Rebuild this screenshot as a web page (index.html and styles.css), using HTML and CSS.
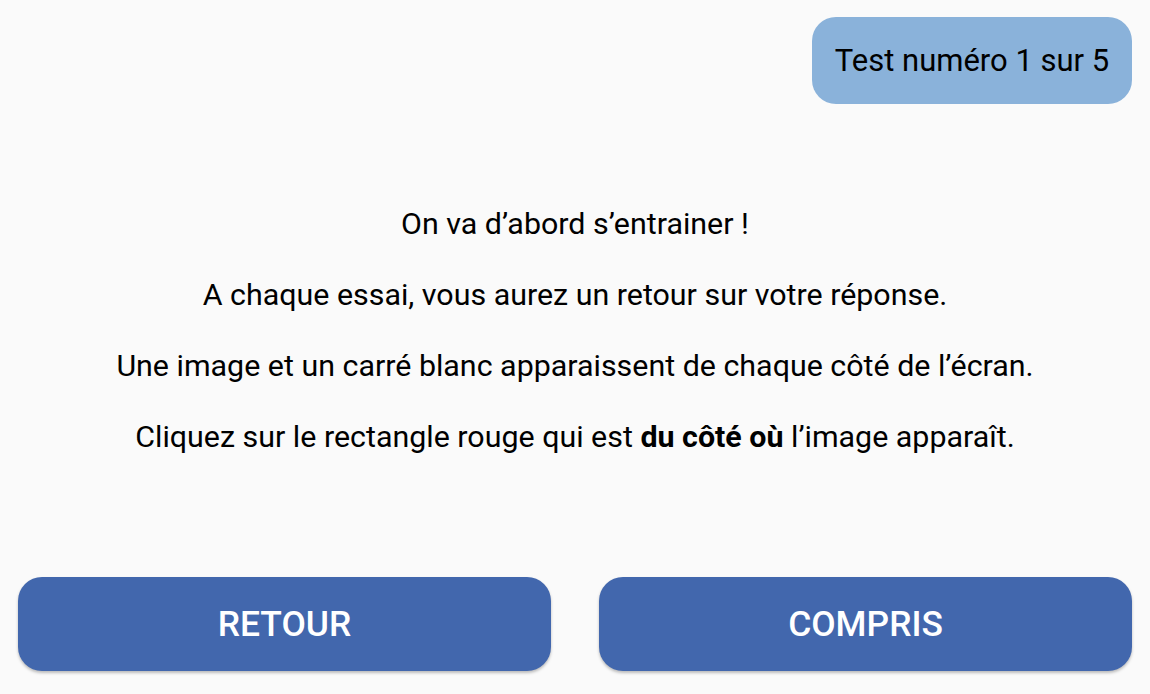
FILE: index.html
```html
<!DOCTYPE html>
<html lang="fr">
<head>
<meta charset="utf-8">
<link rel="stylesheet" href="styles.css">
</head>
<body>
<div class="screen">
  <header class="top">
    <div class="badge">Test numéro 1 sur 5</div>
  </header>
  <main class="content">
    <p>On va d’abord s’entrainer !</p>
    <p>A chaque essai, vous aurez un retour sur votre réponse.</p>
    <p>Une image et un carré blanc apparaissent de chaque côté de l’écran.</p>
    <p>Cliquez sur le rectangle rouge qui est <b>du côté où</b> l’image apparaît.</p>
  </main>
  <footer class="actions">
    <button class="btn">RETOUR</button>
    <button class="btn">COMPRIS</button>
  </footer>
</div>
</body>
</html>
```
FILE: styles.css
```css
html, body {
  margin: 0;
  padding: 0;
  background: #fafafa;
}
body {
  font-family: Roboto, "Liberation Sans", sans-serif;
  color: #000;
}
.screen {
  width: 1150px;
  height: 694px;
  display: flex;
  flex-direction: column;
  box-sizing: border-box;
  padding: 17px 18px 23px;
}
.top {
  display: flex;
  justify-content: flex-end;
}
.badge {
  height: 87px;
  width: 320px;
  box-sizing: border-box;
  display: flex;
  align-items: center;
  justify-content: center;
  background: #8ab2da;
  border-radius: 24px;
  font-size: 31px;
}
.content {
  flex: 1;
  padding-top: 84px;
  text-align: center;
  font-size: 30.4px;
}
.content p {
  margin: 0;
  line-height: 71px;
}
.content b {
  font-weight: 700;
}
.actions {
  display: flex;
  gap: 48px;
}
.btn {
  flex: 1;
  height: 94px;
  border: none;
  border-radius: 24px;
  background: #4267ad;
  color: #fff;
  font-family: Roboto, "Liberation Sans", sans-serif;
  font-size: 35.4px;
  font-weight: 500;
  box-shadow: 0 2px 3px rgba(0,0,0,0.25);
}
```
